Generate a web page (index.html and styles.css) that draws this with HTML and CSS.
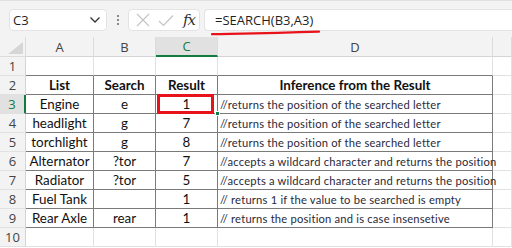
FILE: index.html
```html
<!DOCTYPE html>
<html lang="en">
  <head>
    <meta charset="UTF-8" />
    <title>SEARCH function</title>
    <link rel="stylesheet" href="styles.css">
  </head>
  <body>
    <div class="toolbar">
      <div class="name-box">
        <span>C3</span>
        <svg class="chevron" width="12" height="8" viewBox="0 0 12 8">
          <path d="M1.5 1.5 L6 6 L10.5 1.5" fill="none" stroke="#333" stroke-width="1.3" />
        </svg>
      </div>
      <div class="dots">
        <span></span><span></span><span></span>
      </div>
      <div class="fx-buttons">
        <svg width="14" height="14" viewBox="0 0 14 14">
          <path d="M1 1 L13 13 M13 1 L1 13" stroke="#c4c4c4" stroke-width="1.2" />
        </svg>
        <svg width="16" height="13" viewBox="0 0 16 13">
          <path d="M1 7 L5.5 11.5 L15 1.5" fill="none" stroke="#c4c4c4" stroke-width="1.2" />
        </svg>
        <span class="fx">fx</span>
      </div>
      <div class="formula-bar">
        <span class="formula">=SEARCH(B3,A3)</span>
        <!-- red pen mark under the formula -->
        <svg class="scribble" width="110" height="6" viewBox="0 0 110 6">
          <path d="M1 4.2 C30 3.6 60 3.2 108 1.6" fill="none" stroke="#e8131a" stroke-width="2.2" stroke-linecap="round" />
        </svg>
      </div>
    </div>

    <div class="sheet">
      <!-- column headers -->
      <div class="corner">
        <svg width="15" height="12" viewBox="0 0 15 12"><path d="M15 0 L15 12 L0 12 Z" fill="#d6d6d6" /></svg>
      </div>
      <div class="col-head">A</div>
      <div class="col-head">B</div>
      <div class="col-head active">C</div>
      <div class="col-head">D</div>
      <div class="col-head"></div>

      <!-- row 1 -->
      <div class="row-head">1</div>
      <div class="cell top"></div>
      <div class="cell top"></div>
      <div class="cell top"></div>
      <div class="cell top"></div>
      <div class="cell"></div>

      <!-- row 2 -->
      <div class="row-head">2</div>
      <div class="cell t c bold">List</div>
      <div class="cell t c bold">Search</div>
      <div class="cell t c bold">Result</div>
      <div class="cell t c bold">Inference from the Result</div>
      <div class="cell"></div>

      <!-- row 3 -->
      <div class="row-head active">3</div>
      <div class="cell t c">Engine</div>
      <div class="cell t c">e</div>
      <div class="cell t c selected">1<span class="mark"></span><span class="handle"></span></div>
      <div class="cell t note">//returns the position of the searched letter</div>
      <div class="cell"></div>

      <!-- row 4 -->
      <div class="row-head">4</div>
      <div class="cell t c">headlight</div>
      <div class="cell t c">g</div>
      <div class="cell t c">7</div>
      <div class="cell t note">//returns the position of the searched letter</div>
      <div class="cell"></div>

      <!-- row 5 -->
      <div class="row-head">5</div>
      <div class="cell t c">torchlight</div>
      <div class="cell t c">g</div>
      <div class="cell t c">8</div>
      <div class="cell t note">//returns the position of the searched letter</div>
      <div class="cell"></div>

      <!-- row 6 -->
      <div class="row-head">6</div>
      <div class="cell t c">Alternator</div>
      <div class="cell t c">?tor</div>
      <div class="cell t c">7</div>
      <div class="cell t note">//accepts a wildcard character and returns the position</div>
      <div class="cell"></div>

      <!-- row 7 -->
      <div class="row-head">7</div>
      <div class="cell t c">Radiator</div>
      <div class="cell t c">?tor</div>
      <div class="cell t c">5</div>
      <div class="cell t note">//accepts a wildcard character and returns the position</div>
      <div class="cell"></div>

      <!-- row 8 -->
      <div class="row-head">8</div>
      <div class="cell t c">Fuel Tank</div>
      <div class="cell t c"></div>
      <div class="cell t c">1</div>
      <div class="cell t note">// returns 1 if the value to be searched is empty</div>
      <div class="cell"></div>

      <!-- row 9 -->
      <div class="row-head">9</div>
      <div class="cell t c">Rear Axle</div>
      <div class="cell t c">rear</div>
      <div class="cell t c">1</div>
      <div class="cell t note">// returns the position and is case insensetive</div>
      <div class="cell"></div>

      <!-- row 10 -->
      <div class="row-head">10</div>
      <div class="cell"></div>
      <div class="cell"></div>
      <div class="cell"></div>
      <div class="cell"></div>
      <div class="cell"></div>
    </div>
  </body>
</html>
```

FILE: styles.css
```css
* {
  box-sizing: border-box;
  margin: 0;
  padding: 0;
}

html,
body {
  height: 100%;
  overflow: hidden;
}

body {
  background-color: #ffffff;
  font-family: "Open Sans", "Noto Sans", sans-serif;
  color: #1f1f1f;
}

/* ---------- formula toolbar ---------- */
.toolbar {
  height: 37px;
  background-color: #f3f3f3;
  border-top: 1px solid #e1e1e1;
  display: flex;
  align-items: flex-start;
  padding: 8px 0 0 9px;
}

.name-box {
  width: 98px;
  height: 22px;
  background-color: #ffffff;
  border: 1px solid #e3e3e3;
  border-radius: 4px;
  display: flex;
  align-items: center;
  justify-content: space-between;
  padding: 0 5px 0 3px;
  font-size: 13px;
}

.dots {
  width: 21px;
  height: 22px;
  display: flex;
  flex-direction: column;
  align-items: center;
  justify-content: center;
  gap: 2px;
}
.dots span {
  width: 2px;
  height: 2px;
  background-color: #8a8a8a;
}

.fx-buttons {
  width: 72px;
  height: 22px;
  background-color: #ffffff;
  border: 1px solid #e3e3e3;
  border-radius: 4px;
  display: flex;
  align-items: center;
  padding: 0 4px 0 7px;
  gap: 8px;
}
.fx {
  font-family: "DejaVu Serif", "Liberation Serif", serif;
  font-style: italic;
  font-size: 15px;
  color: #333333;
  margin-left: auto;
  letter-spacing: -1px;
}

.formula-bar {
  flex-grow: 1;
  height: 22px;
  margin-left: 4px;
  background-color: #ffffff;
  border: 1px solid #e3e3e3;
  border-right: none;
  border-radius: 4px 0 0 4px;
  display: flex;
  align-items: center;
  padding-left: 10px;
  position: relative;
}
.formula {
  font-size: 13px;
  color: #1f1f1f;
}
.scribble {
  position: absolute;
  left: 6px;
  top: 20px;
}

/* ---------- grid ---------- */
.sheet {
  display: grid;
  grid-template-columns: 26px 68px 62px 62px 275px 1fr;
  grid-template-rows: 20px repeat(10, 19px);
  font-family: "Lato", "Carlito", sans-serif;
  font-size: 13.4px;
}

.corner {
  background-color: #f3f3f3;
  border-right: 1px solid #dcdcdc;
  border-bottom: 1px solid #dcdcdc;
  display: flex;
  align-items: flex-end;
  justify-content: flex-end;
  padding: 0 2px 2px 0;
}

.col-head {
  background-color: #f3f3f3;
  border-right: 1px solid #dcdcdc;
  border-bottom: 1px solid #d4d4d4;
  display: flex;
  align-items: center;
  justify-content: center;
  font-family: "Open Sans", sans-serif;
  font-size: 13px;
  color: #444444;
}
.col-head.active {
  background-color: #e1e1e1;
  color: #107c41;
  border-bottom: 2px solid #107c41;
}

.row-head {
  background-color: #f3f3f3;
  border-right: 1px solid #d4d4d4;
  border-bottom: 1px solid #e1e1e1;
  display: flex;
  align-items: center;
  justify-content: center;
  font-family: "Open Sans", sans-serif;
  font-size: 13px;
  color: #444444;
}
.row-head.active {
  background-color: #e1e1e1;
  color: #107c41;
  border-right: 2px solid #107c41;
}

.cell {
  border-right: 1px solid #e1e1e1;
  border-bottom: 1px solid #e1e1e1;
  display: flex;
  align-items: center;
  white-space: nowrap;
  overflow: visible;
  color: #111111;
}
.cell.top {
  border-bottom-color: #7a7a7a;
}
.cell.t {
  border-right-color: #7a7a7a;
  border-bottom-color: #7a7a7a;
}
.cell.c {
  justify-content: center;
}
.cell.bold {
  font-weight: 700;
}
.cell.note {
  font-size: 11.2px;
  letter-spacing: 0.2px;
  padding-left: 2px;
  color: #2a2a3a;
}

.cell.selected {
  position: relative;
}
.mark {
  position: absolute;
  left: 1px;
  top: -1px;
  right: 3px;
  bottom: -1px;
  border: 3px solid #e8131a;
}
.handle {
  position: absolute;
  right: -3px;
  bottom: -3px;
  width: 5px;
  height: 5px;
  background-color: #107c41;
  border: 1px solid #ffffff;
}
```
